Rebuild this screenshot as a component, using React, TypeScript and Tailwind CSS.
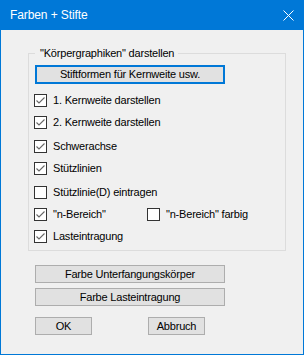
const font = "font-['Liberation_Sans','Arial',sans-serif]";

const Check = ({ checked }: { checked: boolean }) => (
  <div className="flex h-[13px] w-[13px] shrink-0 items-center justify-center border border-[#333333] bg-white">
    {checked && (
      <svg width="11" height="11" viewBox="0 0 11 11">
        <path d="M1.5 5.5 L4 8 L9.5 2.5" fill="none" stroke="#666666" strokeWidth="1.1" />
      </svg>
    )}
  </div>
);

const Row = ({ label, checked, className }: { label: string; checked: boolean; className: string }) => (
  <div className={`flex h-[13px] items-center ${className}`}>
    <Check checked={checked} />
    <span className="ml-[6px] whitespace-nowrap">{label}</span>
  </div>
);

const Btn = ({ children, className }: { children: React.ReactNode; className: string }) => (
  <button className={`flex h-[18px] items-center justify-center border border-[#adadad] bg-[#e1e1e1] text-black ${className}`}>
    {children}
  </button>
);

export default function App() {
  return (
    <div
      className={`flex h-[355px] w-[304px] flex-col border border-t-0 border-[#0078d7] bg-[#f0f0f0] text-[11px] tracking-[-0.2px] text-black ${font}`}
    >
      <div className="flex h-[30px] shrink-0 items-center justify-between bg-[#0078d7] pl-[9px] pr-[9px] text-[12px] tracking-[-0.1px] text-white">
        <span>Farben + Stifte</span>
        <svg width="11" height="11" viewBox="0 0 11 11">
          <path d="M0.5 0.5 L10.5 10.5 M10.5 0.5 L0.5 10.5" stroke="white" strokeWidth="1" />
        </svg>
      </div>

      <fieldset className="ml-[27px] mt-[16px] w-[258px] border border-[#dcdcdc] px-[6px] pb-[7px]">
        <legend className="pl-[5px] pr-[4px] leading-[14px]">"Körpergraphiken" darstellen</legend>
        <button className="mt-[5px] flex h-[19px] w-[190px] items-center justify-center border-2 border-[#0078d7] bg-[#e1e1e1]">
          Stiftformen für Kernweite usw.
        </button>
        <div className="ml-[-1px] flex flex-col">
          <Row className="mt-[10px]" checked label="1. Kernweite darstellen" />
          <Row className="mt-[9px]" checked label="2. Kernweite darstellen" />
          <Row className="mt-[11px]" checked label="Schwerachse" />
          <Row className="mt-[9px]" checked label="Stützlinien" />
          <Row className="mt-[11px]" checked={false} label="Stützlinie(D) eintragen" />
          <div className="mt-[9px] flex">
            <Row className="w-[113px]" checked label={'"n-Bereich"'} />
            <Row className="" checked={false} label={'"n-Bereich" farbig'} />
          </div>
          <Row className="mt-[9px]" checked label="Lasteintragung" />
        </div>
      </fieldset>

      <div className="ml-[34px] flex flex-col">
        <Btn className="mt-[14px] w-[190px]">Farbe Unterfangungskörper</Btn>
        <Btn className="mt-[5px] w-[190px]">Farbe Lasteintragung</Btn>
        <div className="mt-[11px] flex gap-[56px]">
          <Btn className="w-[57px]">OK</Btn>
          <Btn className="w-[57px]">Abbruch</Btn>
        </div>
      </div>
    </div>
  );
}
